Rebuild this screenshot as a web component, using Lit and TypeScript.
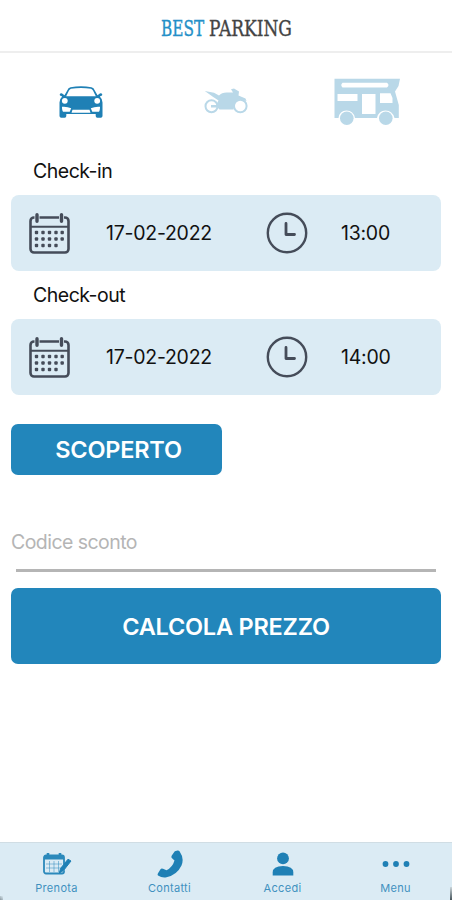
import { LitElement, html, css, svg } from "lit";
import { customElement, property } from "lit/decorators.js";

const calendar = html`<svg viewBox="0 0 41 41" width="41" height="41" fill="none" stroke="#454c59" stroke-width="2.6">
  <rect x="1.5" y="4.5" width="38" height="35" rx="3.5"></rect>
  <path d="M1.5 13.8H39.5" stroke-width="2"></path>
  <path d="M8 2V8M32.5 2V8" stroke="#dbebf4" stroke-width="5"></path>
  <path d="M8 1.7V8.3M32.5 1.7V8.3" stroke-width="3.4" stroke-linecap="round"></path>
  <g fill="#454c59" stroke="none">
    ${[19.5, 26, 32.5].map((y, r) =>
      [7.5, 14, 20.5, 27, 33.2].slice(0, r === 2 ? 4 : 5).map(
        (x) => svg`<rect x=${x - 1.7} y=${y - 1.7} width="3.4" height="3.4" rx="1"></rect>`
      )
    )}
  </g>
</svg>`;

const clock = html`<svg viewBox="0 0 42 42" width="42" height="42" fill="none" stroke="#454c59">
  <circle cx="21" cy="21" r="19.2" stroke-width="2.4"></circle>
  <path d="M20 11.5V22.5H28.5" stroke-width="2.8" stroke-linecap="round" stroke-linejoin="round"></path>
</svg>`;

const car = html`<svg viewBox="0 0 44 32" width="44" height="32">
  <path fill="#1f80b5" fill-rule="evenodd" d="M11.500 1.200Q22 -.6 32.500 1.200L34.500 2.200 38.500 9.300 41.200 7.300Q44 7.300 43 9.400L40.800 10.600Q43.500 13 43.500 16.500V30Q43.500 31.700 41.800 31.700H38.300Q36.700 31.700 36.700 30V28H7.300V30Q7.300 31.700 5.700 31.700H2.200Q.5 31.700 .5 30V16.500Q.5 13 3.200 10.600L1 9.400Q0 7.300 2.800 7.300L5.500 9.300 9.500 2.200ZM12 2.700Q10.800 3 10 4.600L7.200 10.200H36.800L34 4.600Q33.200 3 32 2.700 22 1.200 12 2.700Z"></path>
  <g fill="#fff"><circle cx="5.800" cy="14.800" r="2.900"></circle><circle cx="38.200" cy="14.800" r="2.900"></circle>
  <path d="M3 20.800Q8 20.300 12.200 22.300L10.700 25.800H4.200Q3 25 3 20.800ZM41 20.800Q36 20.300 31.800 22.300L33.300 25.800H39.800Q41 25 41 20.800ZM13.500 23.800H30.500L31.500 26.800H12.500Z"></path></g>
</svg>`;

const moto = html`<svg viewBox="0 0 44 26" width="44" height="26">
  <g fill="none" stroke="#b9d8e8" stroke-width="2"><circle cx="7.500" cy="18.300" r="6"></circle><circle cx="36.300" cy="18" r="6.300"></circle></g>
  <path fill="#b9d8e8" d="M.8 3 10 4.700 15 7.600Q18 4 24 4.500L29 4.500 27 1.200 30 .6 35 3.500 34.500 7.500 41.500 10.500 42.500 13 35 11.300 31 15 29.500 21.500H15.500L13.500 19.500H7V17H12L14.500 12.500 8.500 8.500Z"></path>
</svg>`;

const camper = html`<svg viewBox="0 0 66 48" width="66" height="48">
  <path fill="#b9d8e8" fill-rule="evenodd" d="M.5 .8H66L64.500 8 61 13.500 64.800 27V40H60.500Q58.500 32.500 51.500 32.500T43 40H21Q19.500 32.500 12.500 32.500T4.500 40H.5ZM8.500 4.800Q6 7 8.500 9.600H53Q56 7 53 4.800ZM3.500 16V23H23.500V16ZM28 16V36H41.500V16ZM46 15.200V25H58.500V20L56.500 15.200Z"></path>
  <circle fill="#b9d8e8" cx="12.800" cy="40.300" r="6.800"></circle><circle fill="#b9d8e8" cx="51.800" cy="40.300" r="6.800"></circle>
</svg>`;

const booking = html`<svg viewBox="0 0 30 24" width="30" height="24" fill="none" stroke="#2b89bb">
  <rect x="2" y="3.500" width="20" height="18" rx="2" stroke-width="1.800"></rect>
  <path d="M2 5.500H22" stroke-width="4"></path>
  <path d="M6 1V5M18 1V5" stroke-width="2.600"></path>
  <path d="M4 12H20M4 16H20M7.500 9V20M12 9V20M16.500 9V20" stroke-width="1" opacity=".5"></path>
  <path d="M27.500 8.500 20 18" stroke="#dbebf4" stroke-width="4"></path>
  <path fill="#1f80b5" stroke="#1f80b5" stroke-width="1" d="M26 7.200 29 9 21.500 18.500 17.300 21 18.500 16.500Z"></path>
</svg>`;

const phone = html`<svg viewBox="0 0 26 28" width="26" height="28">
  <path fill="#1f80b5" d="M17.800 1.300 20.500.5Q22 .4 22.700 1.500 27.500 8.500 24.500 15.500 20 25 9.500 27.200 5 28 1 25.500 .2 24.500 1 23.200L3.500 19.200Q4.500 18 6 18.800L9.500 20.300Q15.500 17.300 17.500 10.500L14.800 8Q14 7 14.800 5.500Z"></path>
</svg>`;

const person = html`<svg viewBox="0 0 22 24" width="22" height="24" fill="#1f80b5">
  <circle cx="11" cy="6.400" r="5.900"></circle><path d="M.7 23.500V20.500Q.7 14 11 14T21.300 20.500V23.500Z"></path>
</svg>`;

const dots = html`<svg viewBox="0 0 28 8" width="28" height="8" fill="#1f80b5">
  <circle cx="3.500" cy="4" r="2.900"></circle><circle cx="14" cy="4" r="2.900"></circle><circle cx="24.500" cy="4" r="2.900"></circle>
</svg>`;

@customElement("date-time-card")
class DateTimeCard extends LitElement {
  @property() label = "";
  @property() date = "";
  @property() time = "";

  static styles = css`
    :host { display: block; height: 124px; }
    .label { height: 48px; padding: 0 0 0 22px; line-height: 49px; font-size: 19.5px; letter-spacing: -0.5px; box-sizing: border-box; }
    .card { height: 76px; border-radius: 8px; background: #dbebf4; display: grid;
      grid-template-columns: 95px 160px 74px 1fr; align-items: center; }
    svg { display: block; }
    .cal { padding-left: 18px; }
    .time { padding-left: 1px; }
    .date, .time { font-size: 19.5px; letter-spacing: -0.25px; white-space: nowrap; }
  `;

  render() {
    return html`<div class="label">${this.label}</div>
      <div class="card">
        <div class="cal">${calendar}</div>
        <div class="date">${this.date}</div>
        <div>${clock}</div>
        <div class="time">${this.time}</div>
      </div>`;
  }
}

@customElement("app-root")
class AppRoot extends LitElement {
  static styles = css`
    :host { display: flex; flex-direction: column; height: 900px; background: #fff; color: #111;
      font-family: Inter, "Liberation Sans", sans-serif; overflow: hidden; position: relative; }
    svg { display: block; }
    header { height: 53px; box-sizing: border-box; border-bottom: 2px solid #eee; display: grid; grid-template-columns: 48px 83px; justify-content: center; padding: 14px 0 0 0; }
    .logo { font-family: "DejaVu Serif", serif; font-size: 23px; line-height: 28px; white-space: nowrap; width: max-content; height: 28px; transform-origin: left; }
    .best { color: #2590c8; -webkit-text-stroke: .4px #2590c8; transform: scaleX(.665); }
    .parking { color: #444; -webkit-text-stroke: .4px #444; transform: scaleX(.74); }
    .vehicles { display: grid; grid-template-columns: 59px 144px 131px 1fr; height: 94px; }
    .car { padding-top: 33px; }
    .moto { padding-top: 35px; padding-left: 1px; }
    .camper { padding-top: 25px; }
    main { flex: 1; padding: 0 11px; display: flex; flex-direction: column; }
    button { font: 600 23.5px Inter, sans-serif; color: #fff; background: #2286bb; border: 0; border-radius: 7px; padding: 0; letter-spacing: -0.22px; }
    .cover { width: 211px; height: 51px; margin-top: 29px; padding-left: 4px; }
    .code { margin-top: 52px; height: 44px; line-height: 30px; font-size: 19.5px; letter-spacing: -0.55px; color: #b5b5b5; }
    .rule { height: 2.5px; margin: -2px 5px 0; background: #b5b5b5; }
    .price { height: 76px; margin-top: 16.5px; padding-top: 1px; }
    nav { height: 58px; background: #dbebf4; border-top: 1px solid #d0dde4; box-sizing: border-box; display: grid; grid-template-columns: repeat(4, 113px); }
    .tab { display: flex; flex-direction: column; align-items: center; color: #3f91bf; font-size: 11px; letter-spacing: 0.3px; line-height: 15px; }
    .icon { height: 38px; display: flex; align-items: center; padding-top: 3px; box-sizing: border-box; }
    .corner { position: absolute; bottom: 0; }
    .left { left: 0; width: 3px; height: 4px; background: linear-gradient(45deg, #8b989f, #dbebf4); }
    .right { right: 0; width: 2px; height: 13px; background: linear-gradient(#cad5da, #46545b); }
  `;

  render() {
    const tabs = [
      ["Prenota", booking], ["Contatti", phone], ["Accedi", person], ["Menu", dots],
    ];
    return html`
      <header>
        <div class="logo best">BEST</div>
        <div class="logo parking">PARKING</div>
      </header>
      <div class="vehicles">
        <span></span><div class="car">${car}</div><div class="moto">${moto}</div><div class="camper">${camper}</div>
      </div>
      <main>
        <date-time-card label="Check-in" date="17-02-2022" time="13:00"></date-time-card>
        <date-time-card label="Check-out" date="17-02-2022" time="14:00"></date-time-card>
        <button class="cover">SCOPERTO</button>
        <div class="code">Codice sconto</div>
        <div class="rule"></div>
        <button class="price">CALCOLA PREZZO</button>
      </main>
      <nav>${tabs.map(([name, icon]) => html`<div class="tab"><div class="icon">${icon}</div>${name}</div>`)}</nav>
      <span class="corner left"></span><span class="corner right"></span>
    `;
  }
}
